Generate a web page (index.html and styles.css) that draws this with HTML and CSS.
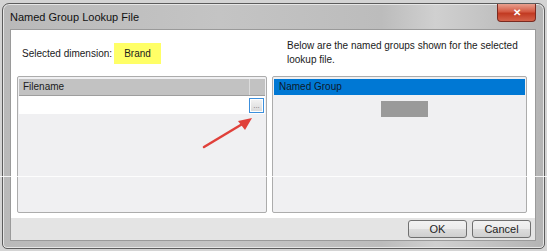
FILE: index.html
```html
<!DOCTYPE html>
<html lang="en">
<head>
    <meta charset="UTF-8">
    <title>Named Group Lookup File</title>
    <link rel="stylesheet" href="styles.css">
</head>
<body>
    <div class="window">
        <div class="titlebar">
            <span class="title">Named Group Lookup File</span>
            <button class="close-btn">&#x2715;</button>
        </div>
        <div class="client">
            <div class="content">
                <div class="info-row">
                    <div class="dimension">
                        <span class="label">Selected dimension:</span>
                        <span class="highlight">Brand</span>
                    </div>
                    <p class="hint">Below are the named groups shown for the selected lookup file.</p>
                </div>
                <div class="panels">
                    <div class="panel">
                        <div class="grid-header">
                            <span class="col-name">Filename</span>
                            <span class="col-extra"></span>
                        </div>
                        <div class="grid-row">
                            <span class="cell"></span>
                            <button class="browse-btn">...</button>
                        </div>
                    </div>
                    <div class="panel">
                        <div class="list-header">Named Group</div>
                        <div class="list-body">
                            <div class="redacted"></div>
                        </div>
                    </div>
                </div>
            </div>
            <div class="button-bar">
                <button class="dlg-btn">OK</button>
                <button class="dlg-btn">Cancel</button>
            </div>
        </div>
        <!-- annotation arrow pointing at the browse button -->
        <svg class="arrow" width="60" height="40" viewBox="0 0 60 40">
            <line x1="4" y1="36" x2="44" y2="12" stroke="#e0403a" stroke-width="2.5" stroke-linecap="round"/>
            <polygon points="52,7 38,10 45,19" fill="#e0403a"/>
        </svg>
    </div>
    <div class="glitch-line"></div>
</body>
</html>
```

FILE: styles.css
```css
body {
    margin: 0;
    background-color: #d4d4d4;
    font-family: "Liberation Sans", Arial, sans-serif;
    font-size: 10px;
    color: #1a1a1a;
    width: 547px;
    height: 251px;
    overflow: hidden;
    position: relative;
}
.window {
    position: relative;
    margin: 3px 0 0 2px;
    width: 543px;
    height: 246px;
    box-sizing: border-box;
    border: 1px solid #5c5c5c;
    border-radius: 7px 7px 5px 5px;
    background: linear-gradient(90deg, #b9b9b9 0%, #c4c4c4 40%, #bcbcbc 70%, #d0d0d0 80%, #b4b4b4 100%);
    box-shadow: inset 0 0 0 1px #e6e6e6;
    padding: 0 8px 7px 7px;
    display: flex;
    flex-direction: column;
}
.titlebar {
    height: 25px;
    display: flex;
    align-items: flex-start;
    justify-content: space-between;
}
.title {
    margin-top: 7px;
    font-size: 11px;
    color: #111;
}
.close-btn {
    width: 39px;
    height: 18px;
    border: 1px solid #7a2a20;
    border-top: none;
    border-radius: 0 0 4px 4px;
    background: linear-gradient(#e8a08f 0%, #d45a43 45%, #c23a22 55%, #d4624a 100%);
    color: #fff;
    font-size: 10px;
    font-weight: bold;
    padding: 0;
    line-height: 16px;
}
.client {
    flex: 1;
    display: flex;
    flex-direction: column;
    background-color: #e4e4e4;
    border: 1px solid #9a9a9a;
}
.content {
    background-color: #fff;
    padding: 0 8px 5px 6px;
    flex: 1;
    display: flex;
    flex-direction: column;
}
.info-row {
    height: 46px;
    display: flex;
}
.dimension {
    box-sizing: border-box;
    width: 256px;
    flex-shrink: 0;
    display: flex;
    align-items: center;
    padding-left: 5px;
    white-space: nowrap;
}
.label {
    width: 92px;
    flex-shrink: 0;
}
.highlight {
    background-color: #ffff66;
    width: 47px;
    height: 21px;
    line-height: 21px;
    text-align: center;
}
.hint {
    margin: 9px 0 0 14px;
    width: 240px;
    line-height: 14px;
}
.panels {
    flex: 1;
    display: flex;
    gap: 5px;
}
.panel {
    box-sizing: border-box;
    flex: 1;
    border: 1px solid #acacac;
    border-radius: 2px;
    background-color: #f0f0f2;
    padding: 2px 1px;
}
.panel:last-child {
    flex: 0 0 255px;
}
.grid-header {
    display: flex;
    height: 16px;
    background-color: #c2c2c2;
    border-bottom: 1px solid #9e9e9e;
}
.col-name {
    flex: 1;
    padding-left: 4px;
    line-height: 16px;
    border-right: 1px solid #dcdcdc;
}
.col-extra {
    width: 15px;
}
.grid-row {
    display: flex;
    justify-content: flex-end;
    align-items: center;
    height: 18px;
    background-color: #fff;
}
.browse-btn {
    width: 15px;
    height: 15px;
    padding: 0;
    margin-right: 1px;
    border: 1px solid #3c8fdc;
    background: linear-gradient(#f4f4f4, #d8d8d8);
    box-shadow: inset 0 0 0 1px #fff;
    font-size: 8px;
    line-height: 9px;
    color: #777;
}
.list-header {
    height: 16px;
    line-height: 16px;
    background-color: #0078d4;
    padding-left: 5px;
    color: #0c1a2c;
}
.list-body {
    padding-top: 6px;
    display: flex;
    justify-content: center;
}
.redacted {
    width: 47px;
    height: 16px;
    background-color: #9a9a9a;
    margin-left: 10px;
}
.button-bar {
    height: 22px;
    display: flex;
    justify-content: flex-end;
    align-items: center;
    gap: 5px;
    padding-right: 4px;
}
.dlg-btn {
    width: 59px;
    height: 18px;
    border: 1px solid #707070;
    border-radius: 3px;
    background: linear-gradient(#f2f2f2 0%, #ebebeb 50%, #dddddd 51%, #cfcfcf 100%);
    font-family: "Liberation Sans", Arial, sans-serif;
    font-size: 11px;
    padding: 0;
    color: #1e1e1e;
}
.arrow {
    position: absolute;
    left: 197px;
    top: 107px;
}
.glitch-line {
    position: absolute;
    left: 0;
    top: 176px;
    width: 547px;
    height: 1px;
    background-color: rgba(255, 255, 255, 0.85);
}
```
